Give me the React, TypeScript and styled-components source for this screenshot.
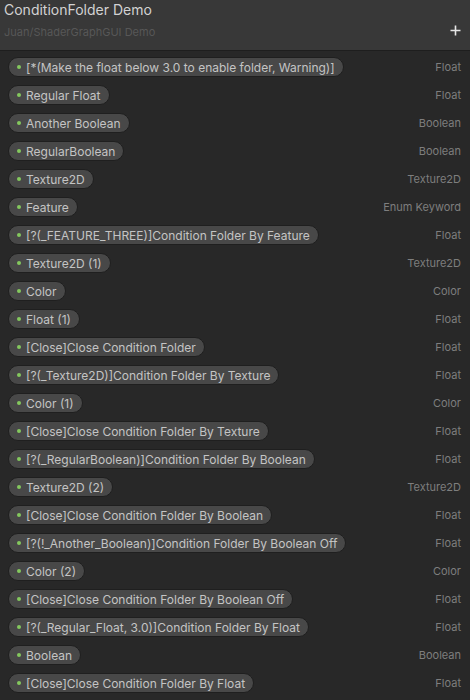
import { createGlobalStyle } from "styled-components";
import styled from "styled-components";

const GlobalStyle = createGlobalStyle`
    html, body {
        margin: 0;
        padding: 0;
        background: #282828;
    }
    body {
        font-family: Inter, "Noto Sans", sans-serif;
        -webkit-font-smoothing: antialiased;
    }
`;

type Property = { name: string; type: string };

const properties: Property[] = [
    { name: "[*(Make the float below 3.0 to enable folder, Warning)]", type: "Float" },
    { name: "Regular Float", type: "Float" },
    { name: "Another Boolean", type: "Boolean" },
    { name: "RegularBoolean", type: "Boolean" },
    { name: "Texture2D", type: "Texture2D" },
    { name: "Feature", type: "Enum Keyword" },
    { name: "[?(_FEATURE_THREE)]Condition Folder By Feature", type: "Float" },
    { name: "Texture2D (1)", type: "Texture2D" },
    { name: "Color", type: "Color" },
    { name: "Float (1)", type: "Float" },
    { name: "[Close]Close Condition Folder", type: "Float" },
    { name: "[?(_Texture2D)]Condition Folder By Texture", type: "Float" },
    { name: "Color (1)", type: "Color" },
    { name: "[Close]Close Condition Folder By Texture", type: "Float" },
    { name: "[?(_RegularBoolean)]Condition Folder By Boolean", type: "Float" },
    { name: "Texture2D (2)", type: "Texture2D" },
    { name: "[Close]Close Condition Folder By Boolean", type: "Float" },
    { name: "[?(!_Another_Boolean)]Condition Folder By Boolean Off", type: "Float" },
    { name: "Color (2)", type: "Color" },
    { name: "[Close]Close Condition Folder By Boolean Off", type: "Float" },
    { name: "[?(_Regular_Float, 3.0)]Condition Folder By Float", type: "Float" },
    { name: "Boolean", type: "Boolean" },
    { name: "[Close]Close Condition Folder By Float", type: "Float" },
];

export default function App() {
    return (
        <>
            <GlobalStyle />
            <Panel>
                <Header>
                    <TitleBlock>
                        <Title>ConditionFolder Demo</Title>
                        <Subtitle>Juan/ShaderGraphGUI Demo</Subtitle>
                    </TitleBlock>
                    <AddButton aria-label="Add">
                        <svg width="11" height="11" viewBox="0 0 11 11">
                            <path d="M5.5 0.5v10M0.5 5.5h10" stroke="#e6e6e6" strokeWidth="1.6" />
                        </svg>
                    </AddButton>
                </Header>
                <List>
                    {properties.map((p, i) => (
                        <Row key={i}>
                            <Pill>
                                <Dot />
                                <PillLabel>{p.name}</PillLabel>
                            </Pill>
                            <TypeLabel>{p.type}</TypeLabel>
                        </Row>
                    ))}
                </List>
            </Panel>
        </>
    );
}

const Panel = styled.div`
    width: 470px;
    height: 700px;
    background: #282828;
    overflow: hidden;
`;

const Header = styled.div`
    height: 50px;
    background: #383838;
    border-bottom: 1px solid #1e1e1e;
    display: flex;
    align-items: flex-start;
    justify-content: space-between;
    padding: 0 9px 0 4px;
    box-sizing: content-box;
`;

const TitleBlock = styled.div`
    display: flex;
    flex-direction: column;
    padding-top: 1px;
`;

const Title = styled.div`
    font-size: 14px;
    line-height: 18px;
    color: #d2d2d2;
`;

const Subtitle = styled.div`
    font-size: 11px;
    line-height: 13px;
    margin-top: 7px;
    color: #575757;
`;

const AddButton = styled.div`
    margin-top: 25px;
    display: flex;
`;

const List = styled.div`
    display: flex;
    flex-direction: column;
    padding: 6px 9px 0 8px;
    gap: 8px;
`;

const Row = styled.div`
    height: 20px;
    display: flex;
    align-items: center;
    justify-content: space-between;
`;

const Pill = styled.div`
    height: 20px;
    box-sizing: border-box;
    display: flex;
    align-items: center;
    gap: 5px;
    padding: 0 8px 0 8px;
    background: #484848;
    border: 1px solid #1f1f1f;
    border-radius: 10px;
`;

const Dot = styled.span`
    width: 4px;
    height: 4px;
    border-radius: 50%;
    background: #84c85e;
`;

const PillLabel = styled.span`
    font-size: 12px;
    color: #c4c4c4;
    white-space: nowrap;
`;

const TypeLabel = styled.span`
    font-size: 11px;
    color: #7e7e7e;
    white-space: nowrap;
`;
